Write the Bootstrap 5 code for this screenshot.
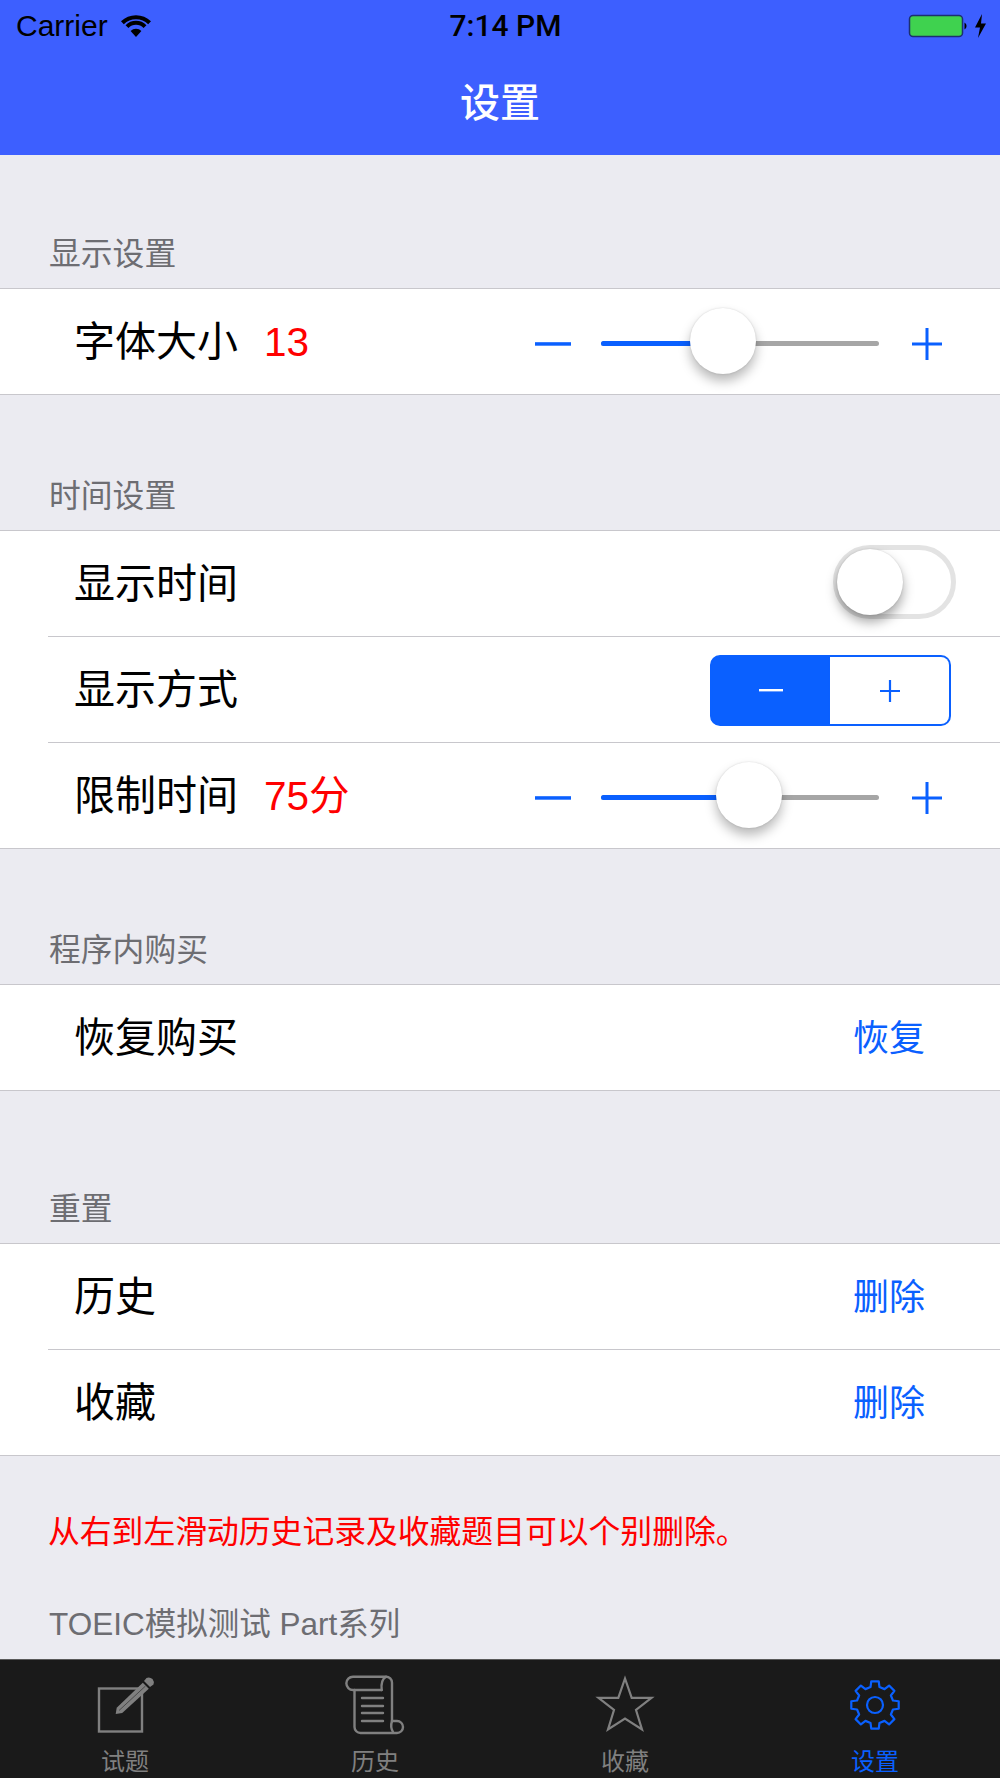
<!DOCTYPE html>
<html lang="zh-CN">
<head>
<meta charset="UTF-8">
<meta name="viewport" content="width=device-width, initial-scale=1.0">
<title>设置</title>
<link href="https://cdn.jsdelivr.net/npm/bootstrap@5.3.0/dist/css/bootstrap.min.css" rel="stylesheet">
<style>
    html, body { height: 100%; }
    body {
        background: #ebebf1;
        font-family: "Liberation Sans", "Noto Sans CJK SC", sans-serif;
        color: #000;
        overflow: hidden;
    }
    .app-shell { height: 1778px; }
    .top-bar { height: 155px; background: #3d5fff; }
    .status-row { height: 52px; padding: 0 12px 0 16px; font-size: 30px; line-height: 52px; }
    .status-col { flex: 1 1 0; }
    .wifi-ico { margin-left: 13px; }
    .status-time { font-family: Roboto, "Liberation Sans", sans-serif; font-weight: 500; font-size: 30px; margin-left: 7px; }
    .nav-title { color: #fff; font-size: 40px; font-weight: 500; line-height: 60px; margin-top: 21px; }

    .sect-label { color: #6d6d72; font-size: 31.8px; line-height: 34px; padding-left: 49px; padding-bottom: 17px; }
    .gap-a { margin-top: 82px; }
    .gap-b { margin-top: 84px; }
    .gap-c { margin-top: 84px; }
    .gap-d { margin-top: 101px; }
    .set-group { border-top: 1px solid #c8c7cc; border-bottom: 1px solid #c8c7cc; border-radius: 0; }
    .set-group .list-group-item { border: 0; border-radius: 0; padding: 0 0 0 48px; background: #fff; color: #000; }
    .set-row { height: 105px; padding-left: 26px; font-size: 41px; }
    .set-row > span { padding-top: 2px; }
    .list-group-item + .list-group-item .set-row { border-top: 1px solid #c8c7cc; height: 106px; }
    .val-red { color: #f00; font-size: 40.5px; margin-left: 26px; }
    .link-act { color: #0a60ff; font-size: 36px; margin-right: 75px; }

    .slide-wrap { height: 66px; padding-top: 4px; margin-right: 55px; gap: 30px; }
    .slide-track { position: relative; width: 278px; height: 5px; background: #a6a6a6; border-radius: 3px; }
    .slide-fill { height: 5px; background: #0a60ff; border-radius: 3px 0 0 3px; }
    .slide-thumb, .switch-thumb {
        position: absolute;
        width: 66px;
        height: 66px;
        border-radius: 50%;
        background: #fff;
    }
    .slide-thumb { top: -33px; margin-left: -33px; box-shadow: 0 7px 12px rgba(0,0,0,.28), 0 0 2px rgba(0,0,0,.15); }
    .switch-box {
        position: relative;
        width: 123px;
        height: 74px;
        margin-right: 44px;
        margin-bottom: 3px;
        border: 5px solid #e3e3e3;
        border-radius: 37px;
        background: #fff;
    }
    .switch-thumb { left: -1px; top: -1px; box-shadow: 0 7px 12px rgba(0,0,0,.35), 0 0 2px rgba(0,0,0,.15); }
    .seg-group { width: 242px; height: 71px; margin-right: 48px; margin-top: 2px; }
    .seg-group .btn {
        padding: 0;
        border: 2px solid #0a60ff;
        border-radius: 10px;
        background: #fff;
        box-shadow: inset 0 0 0 .6px #0a60ff;
        display: flex;
        align-items: center;
        justify-content: center;
    }
    .seg-group .btn.seg-on { background: #0a60ff; flex: 0 0 121px; }
    .seg-group .btn.seg-off { flex: 0 0 121px; border-left-width: 0; box-shadow: none; border-width: 2.6px 2.6px 2.6px 0; }

    .note-red { color: #f00; font-size: 31.8px; line-height: 40px; padding-left: 48px; margin-top: 56px; }
    .note-grey { color: #6d6d72; font-size: 31.5px; line-height: 40px; padding-left: 49px; margin-top: 52px; }

    .tab-strip { height: 119px; background: #1a1a1a; border-top: 1px solid #5a5a5a; color: #808080; overflow: hidden; }
    .tab-col { padding-top: 15px; font-size: 24px; line-height: 30px; text-align: center; }
    .tab-col svg { display: block; margin: 0 auto 12px; }
    .tab-on { color: #0a60ff; }
    .main-area { min-height: 0; overflow: hidden; }
</style>
</head>
<body>
<div class="app-shell d-flex flex-column">
    <header class="top-bar flex-shrink-0">
        <div class="status-row d-flex align-items-center">
            <div class="status-col d-flex align-items-center">
                <span>Carrier</span>
                <svg class="wifi-ico" width="30" height="22" viewBox="0 0 30 22">
                    <path d="M15 22 L9.6 16 A7.5 7.5 0 0 1 20.4 16 Z" fill="#000"/>
                    <path d="M6 11.6 A12.6 12.6 0 0 1 24 11.6" fill="none" stroke="#000" stroke-width="4"/>
                    <path d="M1.4 7.8 A19.5 19.5 0 0 1 28.6 7.8" fill="none" stroke="#000" stroke-width="4"/>
                </svg>
            </div>
            <div class="status-time">7:14 PM</div>
            <div class="status-col d-flex align-items-center justify-content-end">
                <svg width="80" height="24" viewBox="0 0 80 24">
                    <rect x="1.5" y="1.5" width="53" height="21" rx="3.5" fill="#3fd24f" stroke="#1c2f70" stroke-width="1.5"/>
                    <path d="M56.5 8.5 a4 4 0 0 1 0 7 z" fill="#000"/>
                    <path d="M74 0 L67 13.5 H72 L70 24 L78 9.5 H73 Z" fill="#000"/>
                </svg>
            </div>
        </div>
        <div class="nav-title text-center">设置</div>
    </header>

    <main class="main-area flex-grow-1">
        <div class="sect-label gap-a">显示设置</div>
        <div class="list-group set-group">
            <div class="list-group-item">
                <div class="set-row d-flex align-items-center">
                    <span>字体大小</span><span class="val-red">13</span>
                    <div class="slide-wrap d-flex align-items-center ms-auto">
                        <svg width="36" height="32" viewBox="0 0 36 32"><rect y="14.2" width="36" height="3.5" fill="#0a60ff"/></svg>
                        <div class="slide-track">
                            <div class="slide-fill" style="width: 43.9%"></div>
                            <div class="slide-thumb" style="left: 43.9%"></div>
                        </div>
                        <svg width="36" height="32" viewBox="0 0 36 32"><path d="M18 0 V32 M3 16 H33" stroke="#0a60ff" stroke-width="3" fill="none"/></svg>
                    </div>
                </div>
            </div>
        </div>

        <div class="sect-label gap-b">时间设置</div>
        <div class="list-group set-group">
            <div class="list-group-item">
                <div class="set-row d-flex align-items-center">
                    <span>显示时间</span>
                    <div class="switch-box ms-auto"><div class="switch-thumb"></div></div>
                </div>
            </div>
            <div class="list-group-item">
                <div class="set-row d-flex align-items-center">
                    <span>显示方式</span>
                    <div class="btn-group seg-group ms-auto" role="group">
                        <button type="button" class="btn seg-on" aria-label="减">
                            <svg width="24" height="3" viewBox="0 0 24 3"><rect width="24" height="2.4" fill="#fff"/></svg>
                        </button>
                        <button type="button" class="btn seg-off" aria-label="加">
                            <svg width="20" height="22" viewBox="0 0 20 22"><path d="M10 0 V22 M0 11 H20" stroke="#0a60ff" stroke-width="2.2" fill="none"/></svg>
                        </button>
                    </div>
                </div>
            </div>
            <div class="list-group-item">
                <div class="set-row d-flex align-items-center">
                    <span>限制时间</span><span class="val-red">75分</span>
                    <div class="slide-wrap d-flex align-items-center ms-auto">
                        <svg width="36" height="32" viewBox="0 0 36 32"><rect y="14.2" width="36" height="3.5" fill="#0a60ff"/></svg>
                        <div class="slide-track">
                            <div class="slide-fill" style="width: 53.4%"></div>
                            <div class="slide-thumb" style="left: 53.4%"></div>
                        </div>
                        <svg width="36" height="32" viewBox="0 0 36 32"><path d="M18 0 V32 M3 16 H33" stroke="#0a60ff" stroke-width="3" fill="none"/></svg>
                    </div>
                </div>
            </div>
        </div>

        <div class="sect-label gap-c">程序内购买</div>
        <div class="list-group set-group">
            <div class="list-group-item">
                <div class="set-row d-flex align-items-center justify-content-between">
                    <span>恢复购买</span><span class="link-act">恢复</span>
                </div>
            </div>
        </div>

        <div class="sect-label gap-d">重置</div>
        <div class="list-group set-group">
            <div class="list-group-item">
                <div class="set-row d-flex align-items-center justify-content-between">
                    <span>历史</span><span class="link-act">删除</span>
                </div>
            </div>
            <div class="list-group-item">
                <div class="set-row d-flex align-items-center justify-content-between">
                    <span>收藏</span><span class="link-act">删除</span>
                </div>
            </div>
        </div>

        <div class="note-red">从右到左滑动历史记录及收藏题目可以个别删除。</div>
        <div class="note-grey">TOEIC模拟测试 Part系列</div>
    </main>

    <nav class="tab-strip row g-0 flex-shrink-0">
        <div class="col-3 tab-col">
            <svg width="60" height="60" viewBox="0 0 60 60">
                <rect x="4" y="13.5" width="43" height="43" fill="none" stroke="currentColor" stroke-width="2.4"/>
                <path d="M20.7 39 L21.7 32.8 L47.8 7.8 L53.8 13.8 L27.2 38 Z" fill="currentColor"/>
                <path d="M24 35.5 L50.5 11" stroke="#3c3c3c" stroke-width=".8" fill="none"/>
                <path d="M49 6 L51.5 3 Q54.5 1.5 57.5 4 Q59.5 6.5 58.5 9.5 L55 12 Z" fill="currentColor"/>
            </svg>
            试题
        </div>
        <div class="col-3 tab-col">
            <svg width="60" height="60" viewBox="0 0 60 60" fill="none" stroke="currentColor" stroke-width="2.4" stroke-linecap="round" stroke-linejoin="round">
                <path d="M36.7 15 H8 A6.6 6.6 0 0 1 8 1.7 H41 A6 6 0 0 1 47 7.7 V46"/>
                <path d="M36.7 15 C36 9 37 4 41 1.7"/>
                <path d="M9.5 15 V52 A6 6 0 0 0 15.5 58 H52 A6 6 0 0 0 52 46 H47"/>
                <path d="M47 46 Q45 52 48 57"/>
                <path d="M17 23 H38 M17 31 H38 M17 38 H38 M17 46 H38"/>
            </svg>
            历史
        </div>
        <div class="col-3 tab-col">
            <svg width="60" height="60" viewBox="0 0 60 60">
                <path d="M30 3.5 L36.7 22.8 L56.5 22.8 L41 35 L47 54.5 L30 43.5 L13 54.5 L19 35 L3.5 22.8 L23.3 22.8 Z" fill="none" stroke="currentColor" stroke-width="2.2"/>
            </svg>
            收藏
        </div>
        <div class="col-3 tab-col tab-on">
            <svg width="60" height="60" viewBox="0 0 60 60">
                <g transform="translate(30 30)" fill="none" stroke="currentColor" stroke-width="2.2" stroke-linejoin="round">
                    <path d="M-4.48 -17.95 L-3.75 -23.7 L3.75 -23.7 L4.48 -17.95 L9.53 -15.86 L14.11 -19.42 L19.42 -14.11 L15.86 -9.53 L17.95 -4.48 L23.7 -3.75 L23.7 3.75 L17.95 4.48 L15.86 9.53 L19.42 14.11 L14.11 19.42 L9.53 15.86 L4.48 17.95 L3.75 23.7 L-3.75 23.7 L-4.48 17.95 L-9.53 15.86 L-14.11 19.42 L-19.42 14.11 L-15.86 9.53 L-17.95 4.48 L-23.7 3.75 L-23.7 -3.75 L-17.95 -4.48 L-15.86 -9.53 L-19.42 -14.11 L-14.11 -19.42 L-9.53 -15.86 Z"/>
                    <circle r="8"/>
                </g>
            </svg>
            设置
        </div>
    </nav>
</div>
<script src="https://cdn.jsdelivr.net/npm/bootstrap@5.3.0/dist/js/bootstrap.bundle.min.js"></script>
</body>
</html>
